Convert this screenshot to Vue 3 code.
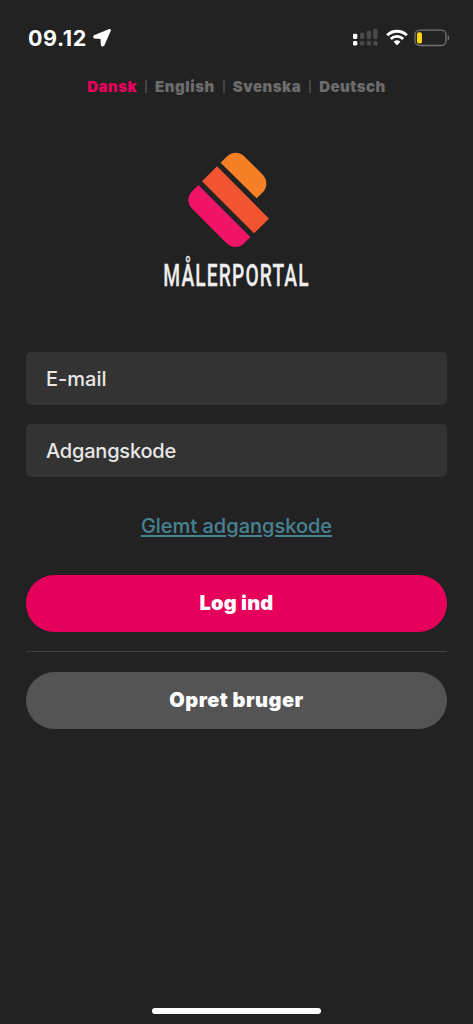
<script setup>
const languages = ['Dansk', 'English', 'Svenska', 'Deutsch']
const bars = [
  { x: 0, y: 5 },
  { x: 7, y: 4 },
  { x: 13.7, y: 2 },
  { x: 20.3, y: 0 }
]
</script>

<template>
  <main class="screen">
    <header class="status">
      <div class="clock">
        <span class="time">09.12</span>
        <svg class="arrow" width="20" height="20" viewBox="0 0 20 20">
          <path d="M17.6 1.8 2.3 8.1Q1.5 9.2 2.5 9.8L9.2 10.2 9.7 17Q10.4 18.3 11.6 17.2L18 2.8Q18.3 1.7 17.6 1.8Z" fill="#fff" stroke="#fff" stroke-width="1.6" stroke-linejoin="round" />
        </svg>
      </div>
      <div class="indicators">
        <svg width="27" height="19" viewBox="0 0 27 19">
          <g v-for="(bar, i) in bars" :key="bar.x" :fill="i ? '#4a4a4a' : '#fff'">
            <rect :x="bar.x" :y="bar.y + 0.8" width="4.3" :height="10.3 - bar.y" rx="1.4" />
            <rect :x="bar.x" y="13" width="4.3" height="4.6" rx="1.4" />
          </g>
        </svg>
        <svg width="22" height="17" viewBox="0 0 22 17" fill="none" stroke="#fff" stroke-width="2.9">
          <path d="M1.2 6.2Q5.3 2.2 11 2.2T20.8 6.2" />
          <path d="M4.8 10Q7.5 7.4 11 7.4T17.2 10" />
          <path d="M7.6 12.7Q11 9.8 14.4 12.7L11.6 15.7Q11 16.3 10.4 15.7Z" fill="#fff" stroke="none" />
        </svg>
        <svg width="36" height="18" viewBox="0 0 36 18">
          <rect x="1" y="1.2" width="31" height="15.3" rx="4.7" fill="none" stroke="#737373" stroke-width="1.3" />
          <rect x="3" y="3.2" width="5" height="11.4" rx="2" fill="#ffd60a" />
          <path d="M33.6 6.1Q35.3 7 35.3 8.9T33.6 11.6Z" fill="#737373" />
        </svg>
      </div>
    </header>

    <nav class="languages">
      <template v-for="(language, i) in languages" :key="language">
        <i v-if="i" class="divider"></i>
        <a :class="{ active: i === 0 }">{{ language }}</a>
      </template>
    </nav>

    <svg class="logo" width="170" height="160" viewBox="0 0 510 480">
      <path fill="#f58025" d="M212 68 229 51Q242 38 257 38Q272 38 284 50L337 103Q349 115 349 131Q349 146 337 158L320 175Z" />
      <path fill="#f15430" d="M201 79 357 236 312 280 156 124Z" />
      <path fill="#ef1465" d="M145 135 301 291 284 308Q272 321 257 321Q241 321 229 309L128 208Q115 195 115 180Q115 165 128 152Z" />
      <text transform="translate(40 437) scale(.62 1)">MÅLERPORTAL</text>
    </svg>

    <form class="form" @submit.prevent>
      <div class="field"><span class="email">E-mail</span></div>
      <div class="field"><span class="password">Adgangskode</span></div>
      <a class="forgot">Glemt adgangskode</a>
      <button class="login">Log ind</button>
      <hr />
      <button class="create">Opret bruger</button>
    </form>

    <div class="home"></div>
  </main>
</template>

<style>
body { background: #222; }
</style>

<style scoped>
.screen {
  box-sizing: border-box;
  display: flex;
  flex-direction: column;
  height: 1024px;
  background: #222;
  color: #fff;
  font-family: Inter, "Liberation Sans", sans-serif;
}
.status {
  display: flex;
  justify-content: space-between;
  height: 76px;
  padding: 0 23px 0 28px;
  box-sizing: border-box;
}
.clock {
  display: flex;
  height: 75px;
  align-items: center;
}
.time {
  width: 60px;
  font-size: 21.5px;
  font-weight: 700;
  letter-spacing: .6px;
}
.arrow { margin-left: 4px; }
.indicators {
  display: flex;
  align-items: center;
  height: 75px;
  gap: 6px;
}
.languages {
  display: flex;
  justify-content: center;
  align-items: center;
  height: 21px;
  gap: 8px;
  color: #6c6c6c;
  font-size: 15px;
  font-weight: 900;
  letter-spacing: .5px;
}
.active { color: #e6005c; }
.divider {
  width: 2px;
  height: 13px;
  background: #444;
}
.logo {
  display: block;
  margin: 43px 0 0 150px;
}
.logo text {
  fill: #eee;
  stroke: #eee;
  stroke-width: .8px;
  font-family: Roboto, sans-serif;
  font-size: 93px;
  font-weight: 500;
  letter-spacing: 5.5px;
}
.form {
  display: flex;
  flex-direction: column;
  margin: 52px 26px 0;
}
.field {
  box-sizing: border-box;
  height: 53px;
  margin-bottom: 19px;
  padding-left: 20px;
  border-radius: 5px;
  background: #333;
  color: #e8e8e8;
  font-size: 20px;
  font-weight: 500;
  line-height: 55px;
}
.password { letter-spacing: -.2px; }
.forgot {
  align-self: center;
  height: 28px;
  margin: 17px 0 34px;
  color: #468494;
  font-size: 20px;
  font-weight: 500;
  line-height: 27px;
  text-decoration: underline;
  text-decoration-thickness: 1.5px;
  text-underline-offset: 2px;
}
button {
  height: 57px;
  padding: 0 0 1px;
  border: 0;
  border-radius: 29px;
  color: #fff;
  font: 900 20px Inter, sans-serif;
}
.login { background: #e6005c; letter-spacing: .2px; }
.create { background: #545454; letter-spacing: .45px; }
hr {
  width: 100%;
  height: 1px;
  margin: 19px 0 20px;
  border: 0;
  background: #424242;
}
.home {
  width: 169px;
  height: 6px;
  margin: auto auto 10px 152px;
  border-radius: 3px;
  background: #fff;
}
</style>
